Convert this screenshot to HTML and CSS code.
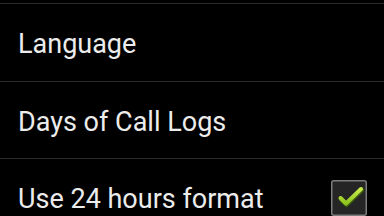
FILE: index.html
```html
<!DOCTYPE html>
<html lang="en">

<head>
    <meta charset="UTF-8">
    <meta name="viewport" content="width=device-width, initial-scale=1.0">
    <title>Settings</title>
    <link rel="stylesheet" href="styles.css">
</head>

<body>
    <ul class="prefs">
        <li class="pref">
            <span class="title">Language</span>
        </li>
        <li class="pref">
            <span class="title">Days of Call Logs</span>
        </li>
        <li class="pref">
            <span class="title">Use 24 hours format</span>
            <span class="check">
                <svg width="36" height="36" viewBox="0 0 36 36">
                    <defs>
                        <linearGradient id="g" x1="0" y1="0" x2="0" y2="1">
                            <stop offset="0" stop-color="#c6ec4a" />
                            <stop offset="1" stop-color="#8fc31f" />
                        </linearGradient>
                    </defs>
                    <rect x="0.75" y="0.75" width="34.5" height="34.5" rx="2" fill="#252525" stroke="#7c7c7c" stroke-width="1.5" />
                    <polyline points="9.5,18 15,23.5 30,9" fill="none" stroke="#3d5a10" stroke-width="5" stroke-linecap="round" stroke-linejoin="round" transform="translate(0.6,1)" />
                    <polyline points="9.5,18 15,23.5 30,9" fill="none" stroke="url(#g)" stroke-width="4" stroke-linecap="round" stroke-linejoin="round" />
                </svg>
            </span>
        </li>
    </ul>
</body>

</html>
```

FILE: styles.css
```css
body,
ul,
li {
    margin: 0;
    padding: 0;
    list-style: none;
}

body {
    background: #000;
    font-family: Roboto, "Noto Sans", sans-serif;
    overflow: hidden;
}

.prefs {
    padding-top: 3px;
}

.pref {
    display: flex;
    justify-content: space-between;
    align-items: flex-start;
    box-sizing: border-box;
    height: 77.5px;
    border-top: 1px solid #2a2a2a;
    padding: 0 17px 0 18px;
}

.title {
    font-size: 27px;
    line-height: 30px;
    margin-top: 25px;
    color: #ececec;
}

.check {
    margin-top: 21px;
    width: 36px;
    height: 36px;
}

.check svg {
    display: block;
}
```
